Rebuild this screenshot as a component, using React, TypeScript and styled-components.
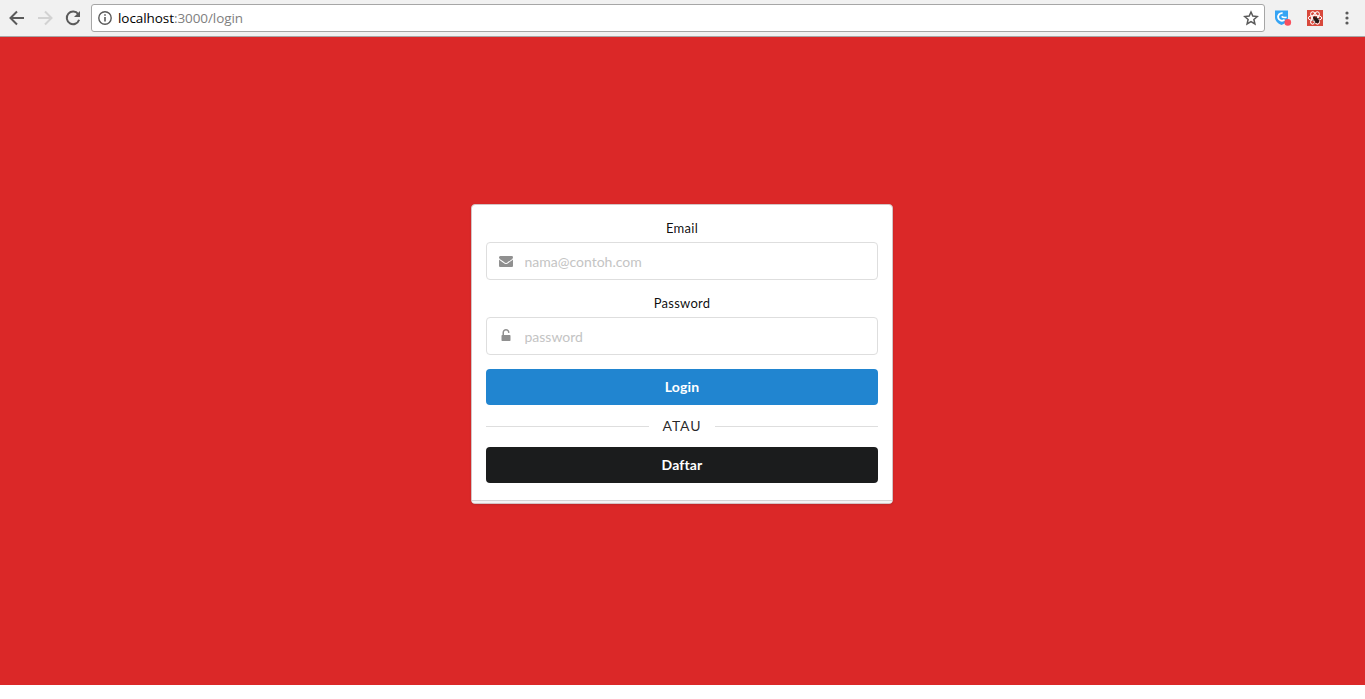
import React from 'react';
import styled, { createGlobalStyle } from 'styled-components';

const GlobalStyle = createGlobalStyle`
  * { box-sizing: border-box; }
  html, body { margin: 0; padding: 0; background: #fff; overflow: hidden; }
`;

const Toolbar = styled.header`
  display: flex;
  align-items: center;
  height: 37px;
  padding: 0 9px 1px 9px;
  background: #f1f1f1;
  border-bottom: 1px solid #a9a5a5;
`;

const NavButtons = styled.nav`
  display: flex;
  gap: 12px;
  width: 82px;
`;

const Icon = styled.svg`
  display: block;
  flex: none;
`;

const AddressBar = styled.div`
  display: flex;
  align-items: center;
  width: 1174px;
  height: 28px;
  padding: 0 5px 0 6px;
  background: #fff;
  border: 1px solid #a6a6a6;
  border-radius: 3px;
`;

const Url = styled.span`
  flex: 1;
  margin-left: 6px;
  font: 13.5px/20px 'Open Sans', sans-serif;
  letter-spacing: -0.07px;
  color: #808080;
`;

const Host = styled.span`
  color: #000;
`;

const Extensions = styled.div`
  display: flex;
  align-items: center;
  margin-left: 9px;
`;

const ReactBadge = styled(Icon)`
  margin-left: 15px;
`;

const MenuDots = styled(Icon)`
  margin-left: 22px;
`;

const Page = styled.main`
  display: flex;
  justify-content: center;
  align-items: flex-start;
  height: 648px;
  padding-top: 167px;
  background: #db2828;
  font-family: Lato, sans-serif;
`;

const Card = styled.section`
  width: 422px;
  height: 300px;
  margin-right: 1px;
  background: #fff;
  border: 1px solid #d4c4c5;
  border-radius: 4px;
  box-shadow: 0 1px 2px 0 rgba(34, 36, 38, 0.15);
`;

const Form = styled.form`
  height: 296px;
  padding: 14px 14px 0;
  border-bottom: 1px solid #d4d4d5;
`;

const CardEdge = styled.div`
  height: 2px;
  background: #f3f3f3;
  border-radius: 0 0 3px 3px;
`;

const Field = styled.div`
  margin-bottom: 14px;
`;

const Label = styled.label`
  display: block;
  height: 19px;
  margin-bottom: 4px;
  font-size: 13px;
  line-height: 19px;
  letter-spacing: 0.25px;
  text-align: center;
  color: rgba(0, 0, 0, 0.95);
`;

const InputBox = styled.div`
  display: flex;
  align-items: center;
  height: 38px;
  padding: 0 11px 0 12px;
  border: 1px solid #dedede;
  border-radius: 4px;
`;

const Input = styled.input`
  flex: 1;
  min-width: 0;
  height: 20px;
  margin-left: 11.5px;
  padding: 0;
  border: 0;
  outline: 0;
  background: transparent;
  font: 14px/17px Lato, sans-serif;
  &::placeholder { color: #c4c4c4; opacity: 1; }
`;

const Button = styled.button<{ $color: string }>`
  display: block;
  width: 100%;
  height: 36px;
  padding: 0;
  border: 0;
  border-radius: 4px;
  background: ${({ $color }) => $color};
  color: #fff;
  font: 700 14px/14px Lato, sans-serif;
  letter-spacing: 0.15px;
`;

const Divider = styled.div`
  display: flex;
  align-items: center;
  gap: 13.6px;
  height: 42px;
  font-size: 14px;
  line-height: 20px;
  letter-spacing: 0.9px;
  color: rgba(0, 0, 0, 0.85);
  &::before, &::after {
    content: '';
    flex: 1;
    height: 1px;
    background: #dedede;
  }
`;

const envelope =
  'M1792 710v794q0 66-47 113t-113 47h-1472q-66 0-113-47t-47-113v-794q44 49 101 87 362 246 497 345 57 42 92.5 65.5t94.5 48 110 24.5h2q51 0 110-24.5t94.5-48 92.5-65.5q170-123 498-345 57-39 100-87zm0-294q0 79-49 151t-122 123q-376 261-468 325-10 7-42.5 31t-54 38.5-52 32.5-57.5 27-50 9h-2q-23 0-50-9t-57.5-27-52-32.5-54-38.5-42.5-31q-91-64-262-182.5t-205-142.5q-62-42-117-115.5t-55-136.5q0-78 41.5-130t118.5-52h1472q65 0 112.5 47t47.5 113z';
const unlock =
  'M1376 768q40 0 68 28t28 68v576q0 40-28 68t-68 28h-960q-40 0-68-28t-28-68v-576q0-40 28-68t68-28h32v-320q0-185 131.5-316.5t316.5-131.5 316.5 131.5 131.5 316.5q0 26-19 45t-45 19h-64q-26 0-45-19t-19-45q0-106-75-181t-181-75-181 75-75 181v320h736z';

const FieldIcon = ({ path }: { path: string }) => (
  <Icon width="14" height="14" viewBox="0 0 1792 1792" fill="#909090">
    <path d={path} />
  </Icon>
);

const Arrow = ({ color, flip }: { color: string; flip?: boolean }) => (
  <Icon width="16" height="16" viewBox="0 0 16 16" fill="none" stroke={color} strokeWidth="2">
    <path d={flip ? 'M1 8H14M8 1.5L14.5 8L8 14.5' : 'M15 8H2M8 1.5L1.5 8L8 14.5'} />
  </Icon>
);

export default function App() {
  return (
    <>
      <GlobalStyle />
      <Toolbar>
        <NavButtons>
          <Arrow color="#5a5a5a" />
          <Arrow color="#d2d2d2" flip />
          <Icon width="16" height="16" viewBox="0 0 16 16">
            <path d="M13.2 4.2A6.3 6.3 0 1 0 14.1 9.8" fill="none" stroke="#5a5a5a" strokeWidth="2" />
            <path d="M15 1V7H9Z" fill="#5a5a5a" />
          </Icon>
        </NavButtons>
        <AddressBar>
          <Icon width="14" height="14" viewBox="0 0 14 14">
            <circle cx="7" cy="7" r="6.2" fill="none" stroke="#5a5a5a" strokeWidth="1.4" />
            <path d="M6.2 3.3h1.6v1.5H6.2zM6.2 6h1.6v4.6H6.2z" fill="#5a5a5a" />
          </Icon>
          <Url><Host>localhost</Host>:3000/login</Url>
          <Icon width="16" height="16" viewBox="0 0 16 16" fill="none" stroke="#5a5a5a" strokeWidth="1.5">
            <path d="M8 2l1.8 4.1 4.5.4-3.4 3 1 4.4L8 11.6l-3.9 2.3 1-4.4-3.4-3 4.5-.4z" />
          </Icon>
        </AddressBar>
        <Extensions>
          <Icon width="18" height="18" viewBox="0 0 18 18">
            <path d="M1 1.5H14V9Q13.5 13.5 7.5 16Q1.5 13.5 1 9Z" fill="#35a4f4" />
            <path d="M8.6 4.2A3.8 3.8 0 1 0 10.6 10.6" fill="none" stroke="#fff" strokeWidth="1.9" />
            <path d="M7.6 7.4Q9.4 9 12.6 8.2" fill="none" stroke="#fff" strokeWidth="1.5" />
            <circle cx="13.8" cy="13.4" r="3.3" fill="#f9505d" />
          </Icon>
          <ReactBadge width="16" height="16" viewBox="0 0 16 16">
            <path fill="#d8483b" d="M0 0H16V16H0z" />
            <g fill="none" stroke="#fff" strokeWidth="1">
              <ellipse cx="8" cy="8" rx="6.8" ry="2.7" />
              <ellipse cx="8" cy="8" rx="6.8" ry="2.7" transform="rotate(60 8 8)" />
              <ellipse cx="8" cy="8" rx="6.8" ry="2.7" transform="rotate(120 8 8)" />
            </g>
            <ellipse cx="9.6" cy="10.4" rx="2" ry="3" fill="#261917" transform="rotate(-40 9.6 10.4)" />
            <circle cx="7.4" cy="7.8" r="1.4" fill="#261917" />
            <path d="M5.4 10.4L12.4 8.4M7.4 13.2L12.4 10.4M9.4 6.4L10.4 13" stroke="#261917" strokeWidth=".8" />
          </ReactBadge>
          <MenuDots width="4" height="14" viewBox="0 0 4 14" fill="#5a5a5a">
            <circle cx="2" cy="2" r="1.6" />
            <circle cx="2" cy="7" r="1.6" />
            <circle cx="2" cy="12" r="1.6" />
          </MenuDots>
        </Extensions>
      </Toolbar>
      <Page>
        <Card>
          <Form>
            <Field>
              <Label htmlFor="email">Email</Label>
              <InputBox>
                <FieldIcon path={envelope} />
                <Input id="email" type="email" placeholder="nama@contoh.com" />
              </InputBox>
            </Field>
            <Field>
              <Label htmlFor="password">Password</Label>
              <InputBox>
                <FieldIcon path={unlock} />
                <Input id="password" type="password" placeholder="password" />
              </InputBox>
            </Field>
            <Button type="button" $color="#2185d0">Login</Button>
            <Divider>ATAU</Divider>
            <Button type="button" $color="#1b1c1d">Daftar</Button>
          </Form>
          <CardEdge />
        </Card>
      </Page>
    </>
  );
}
